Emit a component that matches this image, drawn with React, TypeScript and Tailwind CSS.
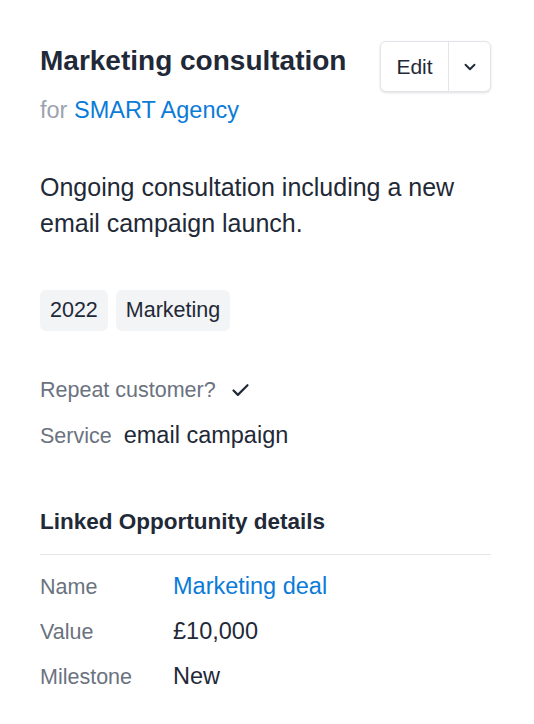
import { ChevronDown, Check } from "lucide-react";

const details = [
  { label: "Name", value: "Marketing deal", link: true },
  { label: "Value", value: "£10,000" },
  { label: "Milestone", value: "New" },
];

export default function App() {
  return (
    <main className="min-h-screen bg-white px-10 pt-[41px] text-[#1f2937] [font-family:'Liberation_Sans',Arial,sans-serif]">
      <div className="w-[451px]">
        {/* Header */}
        <div className="flex items-start justify-between">
          <div>
            <h1 className="mt-[3px] text-[28px] font-bold leading-[34px]">Marketing consultation</h1>
            <p className="mt-[18px] text-[23.5px] leading-[28px] text-[#9ca3af]">
              for <a className="text-[#0b7bd8]">SMART Agency</a>
            </p>
          </div>
          <div className="flex h-[51px] w-[111px] shrink-0 items-stretch rounded-md border border-[#e2e5ea] bg-white shadow-sm">
            <button className="w-[67px] text-[21px] text-[#1f2937]">Edit</button>
            <div className="w-px bg-[#e2e5ea]" />
            <button className="flex flex-1 items-center justify-center">
              <ChevronDown className="size-[18px]" strokeWidth={2.5} />
            </button>
          </div>
        </div>

        <p className="mt-[45px] text-[25px] leading-[36px]">
          Ongoing consultation including a new email campaign launch.
        </p>

        <div className="mt-[49px] flex gap-2">
          {["2022", "Marketing"].map((t) => (
            <span key={t} className="rounded-md bg-[#f3f4f6] px-[10px] py-[8px] text-[21.5px] leading-[25px]">
              {t}
            </span>
          ))}
        </div>

        <div className="mt-[45px] flex items-center gap-[14px] leading-[28px]">
          <span className="text-[21.5px] text-[#6b7280]">Repeat customer?</span>
          <Check className="size-[21px]" strokeWidth={2.5} />
        </div>
        <div className="mt-[17px] flex items-baseline gap-[12px] leading-[28px]">
          <span className="text-[21.5px] text-[#6b7280]">Service</span>
          <span className="text-[23.5px]">email campaign</span>
        </div>

        <h2 className="mt-[58px] text-[22.5px] font-bold leading-[28px]">Linked Opportunity details</h2>
        <div className="mt-[18px] border-t border-[#e5e7eb]" />

        <div className="mt-[17px] flex flex-col gap-[16px]">
          {details.map((d) => (
            <div key={d.label} className="flex items-baseline leading-[28px]">
              <span className="w-[133px] text-[21.5px] text-[#6b7280]">{d.label}</span>
              <span className={d.link ? "text-[23.5px] text-[#0b7bd8]" : "text-[23.5px]"}>{d.value}</span>
            </div>
          ))}
        </div>
      </div>
    </main>
  );
}
